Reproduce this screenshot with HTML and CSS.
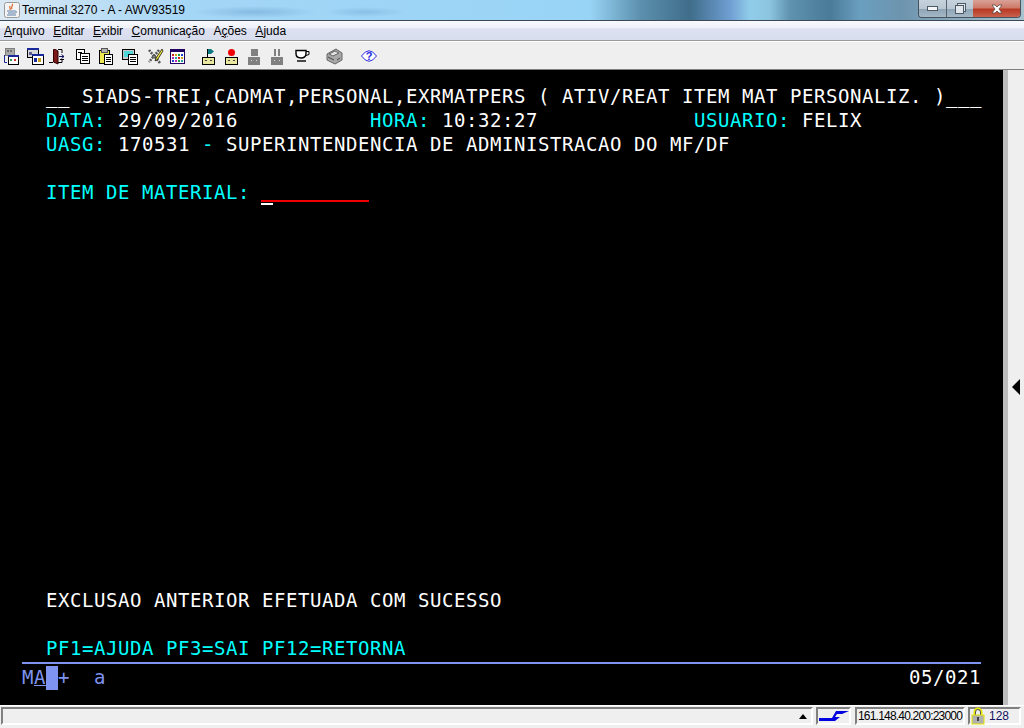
FILE: index.html
```html
<!DOCTYPE html>
<html lang="pt">
<head>
<meta charset="utf-8">
<title>Terminal 3270</title>
<link rel="stylesheet" href="styles.css">
</head>
<body>
<div class="window">
  <header class="titlebar">
    <svg class="app-icon" width="16" height="16" viewBox="0 0 16 16"><rect x="0.5" y="0.5" width="15" height="15" rx="2" fill="#f4f4f4" stroke="#9a9a9a"/><path d="M8 2c2 2-2 3 0 5M6 4c-1 2 1 2 0 4" fill="none" stroke="#d8642a" stroke-width="1.2"/><path d="M3 9h8M4 11h7M3 13h9" stroke="#5a7fa8" fill="none"/><path d="M11 9c2 0 2 2 0 2" stroke="#5a7fa8" fill="none"/></svg>
    <span class="title-text">Terminal 3270 - A - AWV93519</span>
    <div class="win-controls">
      <div class="win-btn btn-min"><span class="glyph-min"></span></div>
      <div class="win-btn btn-max"><span class="glyph-max"></span></div>
      <div class="win-btn btn-close"><svg width="12" height="10" viewBox="0 0 12 10"><path d="M1 1h3l2 2 2-2h3L8 5l3 4H8L6 7 4 9H1l3-4z" fill="#fff" stroke="#4a3a3a" stroke-width="0.7"/></svg></div>
    </div>
  </header>
  <nav class="menubar">
    <span class="menu-item"><u>A</u>rquivo</span>
    <span class="menu-item"><u>E</u>ditar</span>
    <span class="menu-item"><u>E</u>xibir</span>
    <span class="menu-item"><u>C</u>omunicação</span>
    <span class="menu-item">A<u>ç</u>ões</span>
    <span class="menu-item"><u>A</u>juda</span>
  </nav>
  <div class="toolbar">
    <svg class="tool m7" width="16" height="18" viewBox="0 0 16 18"><rect x="2.500" y="1.500" width="9" height="7" fill="#a8a8a8" stroke="#808080"/><path d="M4 3h2v2H4zM7 3h2v2H7z" fill="#707070"/><rect x="5.500" y="8.500" width="10" height="9" fill="#fff" stroke="#000"/><rect x="5" y="8" width="11" height="2" fill="#1a2a9a"/><rect x="7" y="12" width="2" height="2" fill="#2a9a5a"/><rect x="11" y="12" width="2" height="2" fill="#d03030"/><path d="M1.500 8v7.500H4" fill="none" stroke="#1a2a9a"/></svg>
    <svg class="tool m5" width="18" height="18" viewBox="0 0 18 18"><rect x="1.500" y="1.500" width="11" height="9" fill="#d8d8d8" stroke="#000"/><rect x="1" y="1" width="12" height="2" fill="#1a2a9a"/><rect x="3" y="5" width="3" height="3" fill="#606090"/><rect x="6.500" y="7.500" width="11" height="10" fill="#fff" stroke="#000"/><rect x="6" y="7" width="12" height="2" fill="#1a2a9a"/><rect x="8" y="11" width="3" height="4" fill="#1a2a9a"/><rect x="12" y="11" width="3" height="4" fill="#c8a020"/></svg>
    <svg class="tool m10" width="16" height="18" viewBox="0 0 16 18"><path d="M0 15.500h4" stroke="#000"/><path d="M4.500 2.500h2L9 4v13l-4.500-2z" fill="#7a1a1a" stroke="#300"/><path d="M9 2.500h4V6M13 12v3.500H9" fill="none" stroke="#000"/><path d="M10 9.500h5M12.500 7.500l2.500 2-2.500 2" fill="none" stroke="#101060"/><path d="M11 12.500h4" stroke="#000"/></svg>
    <svg class="tool m8" width="15" height="16" viewBox="0 0 15 16"><rect x="1.500" y="1.500" width="8" height="10" fill="#fff" stroke="#000"/><rect x="5.500" y="5.500" width="9" height="10" fill="#fff" stroke="#000"/><path d="M7 8.500h6M7 10.500h6M7 12.500h6M3 4.500h4" stroke="#000"/></svg>
    <svg class="tool m8" width="15" height="18" viewBox="0 0 15 18"><rect x="1.500" y="3.500" width="10" height="13" fill="#f0e850" stroke="#000"/><rect x="3.500" y="1.500" width="6" height="4" fill="#b0b0b0" stroke="#555"/><rect x="6.500" y="7.500" width="8" height="10" fill="#fff" stroke="#000"/><path d="M8 10.500h5M8 12.500h5M8 14.500h5" stroke="#000"/></svg>
    <svg class="tool m9" width="17" height="17" viewBox="0 0 17 17"><rect x="1.500" y="1.500" width="12" height="10" fill="#c8c8c8" stroke="#000"/><rect x="3" y="3" width="9" height="6" fill="#50d8d8"/><rect x="7.500" y="6.500" width="9" height="10" fill="#fff" stroke="#000"/><path d="M9 9.500h6M9 11.500h6M9 13.500h6" stroke="#000"/></svg>
    <svg class="tool m6" width="17" height="17" viewBox="0 0 17 17"><path d="M2 2l11 13M12 2L2 14" stroke="#555" stroke-width="2.600" stroke-dasharray="2 1"/><path d="M15 1l-6 9-1 3 3-2 5-8z" fill="#e8e040" stroke="#000" stroke-width="0.7"/></svg>
    <svg class="tool m16" width="15" height="15" viewBox="0 0 15 15"><rect x="0.5" y="0.5" width="14" height="14" fill="#fff" stroke="#200060"/><rect x="1" y="1" width="13" height="2" fill="#200060"/><path d="M2 5h2v2H2z" fill="#d02020"/><path d="M5 5h2v2H5z" fill="#d0a020"/><path d="M8 5h2v2H8z" fill="#20a040"/><path d="M11 5h2v2h-2z" fill="#2040d0"/><path d="M2 8h2v2H2z" fill="#c020c0"/><path d="M5 8h2v2H5z" fill="#20a0a0"/><path d="M8 8h2v2H8z" fill="#d02020"/><path d="M11 8h2v2h-2z" fill="#d0a020"/><path d="M2 11h2v2H2z" fill="#2040d0"/><path d="M5 11h2v2H5z" fill="#c020c0"/><path d="M8 11h2v2H8z" fill="#20a040"/><path d="M11 11h2v2h-2z" fill="#20a0a0"/></svg>
    <svg class="tool m9" width="14" height="17" viewBox="0 0 14 17"><path d="M6.500 1v8" stroke="#000"/><path d="M7 1h3l3 2.500L10 6H7z" fill="#0a7a80"/><rect x="1.500" y="9.500" width="12" height="7" fill="#e8e8a0" stroke="#000"/><path d="M4 12.500h2M9 12.500h2" stroke="#404040"/></svg>
    <svg class="tool m9" width="14" height="17" viewBox="0 0 14 17"><circle cx="7.500" cy="4.500" r="3.500" fill="#f00000"/><rect x="1.500" y="9.500" width="12" height="7" fill="#e8e8a0" stroke="#000"/><path d="M4 12.500h2M9 12.500h2" stroke="#404040"/></svg>
    <svg class="tool m9" width="14" height="17" viewBox="0 0 14 17"><rect x="4" y="1" width="7" height="7" fill="#808080"/><rect x="1" y="9" width="12" height="8" fill="#808080"/><path d="M4 12.500h1M9 12.500h1" stroke="#d8d8d8"/></svg>
    <svg class="tool m11" width="14" height="17" viewBox="0 0 14 17"><path d="M4 1h2v7H4zM8 1h2v7H8z" fill="#808080"/><rect x="1" y="9" width="12" height="8" fill="#808080"/><path d="M4 12.500h1M9 12.500h1" stroke="#d8d8d8"/></svg>
    <svg class="tool m16" width="15" height="14" viewBox="0 0 15 14"><path d="M1 1.500h10v3c0 3-2 4.500-5 4.500S1 7.500 1 4.500z" fill="#fff" stroke="#000" stroke-width="1.400"/><path d="M11 2.500h3v3l-3 1" fill="none" stroke="#000"/><path d="M2 12h9" stroke="#000" stroke-width="1.400"/></svg>
    <svg class="tool m18" width="17" height="17" viewBox="0 0 17 17"><path d="M1 6l9-5 6 4v7l-7 4-8-4z" fill="#a8a8a8" stroke="#666"/><path d="M3 6l6-3 4 2-6 3z" fill="#e4e4e4" stroke="#666"/><path d="M2 9l6 3M11 12l3-2" stroke="#444"/></svg>
    <svg class="tool" width="16" height="14" viewBox="0 0 16 14"><path d="M0.500 7Q8-3.500 15.500 7 8 17.500 0.500 7z" fill="#fff" stroke="#2828e0"/><text class="help-q" x="8" y="11" text-anchor="middle">?</text></svg>
  </div>
  <main class="workarea">
    <section class="terminal">
      <div class="screen"><span class="w">  __ SIADS-TREI,CADMAT,PERSONAL,EXRMATPERS ( ATIV/REAT ITEM MAT PERSONALIZ. )___</span>
<span class="c">  DATA:</span><span class="w"> 29/09/2016</span><span class="c">           HORA:</span><span class="w"> 10:32:27</span><span class="c">             USUARIO:</span><span class="w"> FELIX</span>
<span class="c">  UASG:</span><span class="w"> 170531 </span><span class="c">-</span><span class="w"> SUPERINTENDENCIA DE ADMINISTRACAO DO MF/DF</span>

<span class="c">  ITEM DE MATERIAL: </span><span class="field"><span class="cur"></span>         </span>
















<span class="w">  EXCLUSAO ANTERIOR EFETUADA COM SUCESSO</span>

<span class="c">  PF1=AJUDA PF3=SAI PF12=RETORNA</span></div>
      <div class="oia">
        <span class="oia-left">M<span class="oia-a">A</span><span class="oia-block"></span>+  a</span>
        <span class="oia-pos">05/021</span>
      </div>
    </section>
    <div class="scroll-strip"></div>
    <aside class="side-panel"><span class="side-arrow"></span></aside>
  </main>
  <footer class="statusbar">
    <div class="status-msg"><span class="status-arrow"></span></div>
    <div class="status-cell status-conn"><svg width="30" height="12" viewBox="0 0 30 12"><path d="M0 8h13l4-7h13l-7 3h-5l-2 3h5l-5 4H0z" fill="#0000e0"/></svg></div>
    <div class="status-cell status-host">161.148.40.200:23000</div>
    <div class="status-cell status-sec"><svg width="14" height="18" viewBox="0 0 14 18"><path d="M3.500 8V5a3.500 3.500 0 0 1 7 0v3" fill="none" stroke="#e8e800" stroke-width="2"/><path d="M4.500 8V5a2.500 2.500 0 0 1 5 0v3" fill="none" stroke="#555"/><rect x="1" y="8" width="12" height="9" fill="#b0b0b0" stroke="#e8e800"/><rect x="6" y="10" width="2" height="4" fill="#444"/></svg><span class="sec-num">128</span></div>
  </footer>
</div>
</body>
</html>
```
FILE: styles.css
```css
* { box-sizing: border-box; }
html, body { margin: 0; padding: 0; height: 100%; }
body { font-family: "Liberation Sans", Arial, sans-serif; background: #f0f0f0; overflow: hidden; }
.window { width: 1024px; height: 728px; display: flex; flex-direction: column; }

.titlebar {
  height: 21px; flex: none; display: flex; align-items: center; padding: 0 3px 0 4px; gap: 2px;
  background:
    radial-gradient(ellipse 62px 6px at 255px 12px, rgba(110,165,210,.55), transparent),
    radial-gradient(ellipse 40px 5px at 365px 12px, rgba(110,165,210,.45), transparent),
    linear-gradient(90deg, #dbe9f3 0, #c8e2f4 60px, #a4d6f6 190px, #98d4f6 590px, #5c90ae 640px, #3f6d8a 690px, #6f9ed2 730px, #90cdea 750px, #8cc4de 770px, #5e92ae 790px, #4a7b98 830px, #6a9fc0 860px, #6d94ae 900px, #a9c2cf 1024px);
  border-bottom: 1px solid #3c4a55;
}
.app-icon { flex: none; }
.title-text { font-size: 12px; color: #000; flex: 1; line-height: 16px; }
.win-controls { display: flex; align-self: flex-start; height: 18px; border: 1px solid #46525c; border-top: 0; border-radius: 0 0 4px 4px; overflow: hidden; }
.win-btn { display: flex; align-items: center; justify-content: center; height: 17px; }
.btn-min { width: 28px; background: linear-gradient(#c6d3dc 0, #b9c8d2 50%, #8fa5b6 55%, #a5b8c6 100%); border-right: 1px solid #55626c; }
.btn-max { width: 26px; background: linear-gradient(#c6d3dc 0, #b9c8d2 50%, #8fa5b6 55%, #a5b8c6 100%); }
.btn-close { width: 47px; background: linear-gradient(#d8a298 0, #cf7a6a 45%, #b83a24 55%, #c8624e 100%); }
.glyph-min { width: 11px; height: 5px; background: #f4f6f8; border: 1px solid #4d5a66; }
.glyph-max { width: 9px; height: 9px; margin: 2px 2px 0 0; background: #dfe6ec; border: 1px solid #4d5a66; box-shadow: 2px -2px 0 -1px #dfe6ec, 2px -2px 0 0 #4d5a66; }

.menubar {
  height: 20px; flex: none; display: flex; align-items: center; gap: 8.5px; padding: 1px 4px 0;
  background: linear-gradient(#f7f9fd 0, #eef1fa 38%, #dde1f1 40%, #d8ddee 100%);
  border-bottom: 1px solid #9a9a9a;
  font-size: 12px; color: #000;
}
.menu-item { line-height: 16px; }

.toolbar {
  height: 28px; flex: none; display: flex; align-items: center; padding: 1px 0 0 3px;
  background: #efefef; border-top: 1px solid #fff;
}
.tool { flex: none; }
.m5 { margin-right: 5px; }
.m6 { margin-right: 6px; }
.m7 { margin-right: 7px; }
.m8 { margin-right: 8px; }
.m9 { margin-right: 9px; }
.m10 { margin-right: 10px; }
.m11 { margin-right: 11px; }
.m16 { margin-right: 16px; }
.m18 { margin-right: 18px; }
.help-q { font: bold 11px "Liberation Sans", sans-serif; fill: #2828e0; }

.workarea { height: 636px; flex: none; display: flex; border-top: 1px solid #808080; }
.terminal { width: 1003px; flex: none; background: #000; padding: 14px 0 0 22px; display: flex; flex-direction: column; }
.screen {
  font-family: "DejaVu Sans Mono", monospace; font-size: 19px; letter-spacing: 0.56px; line-height: 24px; height: 578px;
  white-space: pre; color: #fff;
}
.w { color: #fff; }
.c { color: #00ffff; }
.field { position: relative; display: inline-block; margin-left: -1px; height: 24px; vertical-align: top; background: linear-gradient(#f00000, #f00000) no-repeat 0 20px / 108px 2px; }
.cur { position: absolute; left: 0; top: 23px; width: 12px; height: 2px; background: #fff; }

.oia {
  width: 959px; border-top: 2px solid #7f93f0; padding-top: 2px;
  display: flex; justify-content: space-between; align-items: flex-start;
  font-family: "DejaVu Sans Mono", monospace; font-size: 19px; letter-spacing: 0.56px; line-height: 22px; white-space: pre;
}
.oia-left { color: #7f93f0; }
.oia-a { text-decoration: underline; text-decoration-thickness: 1px; text-underline-offset: 1px; }
.oia-block { display: inline-block; width: 12px; height: 24px; margin-bottom: -2px; vertical-align: top; background: #7f93f0; }
.oia-pos { color: #fff; }

.scroll-strip { width: 5px; flex: none; background: #bdbdbd; }
.side-panel { flex: 1; background: #efefef; display: flex; align-items: center; padding: 0 0 2px 4px; }
.side-arrow { width: 0; height: 0; border: 8px solid transparent; border-left-width: 0; border-right: 8px solid #000; }

.statusbar { height: 22px; flex: none; display: flex; gap: 3px; padding: 1px 3px 2px 1px; background: #efefef; border-top: 1px solid #fff; font-size: 12px; }
.status-msg { width: 812px; display: flex; align-items: center; justify-content: flex-end; padding-right: 4px; border: 2px solid; border-color: #808080 #fff #fff #808080; }
.status-arrow { width: 0; height: 0; border: 4px solid transparent; border-top-width: 0; border-bottom: 5px solid #000; }
.status-cell { display: flex; align-items: center; border: 2px solid; border-color: #808080 #fff #fff #808080; }
.status-conn { width: 35px; justify-content: center; }
.status-host { width: 110px; margin-left: 1px; padding-left: 1px; white-space: nowrap; letter-spacing: -0.8px; }
.status-sec { width: 53px; padding-left: 1px; gap: 4px; }
.sec-num { color: #101060; }
```
